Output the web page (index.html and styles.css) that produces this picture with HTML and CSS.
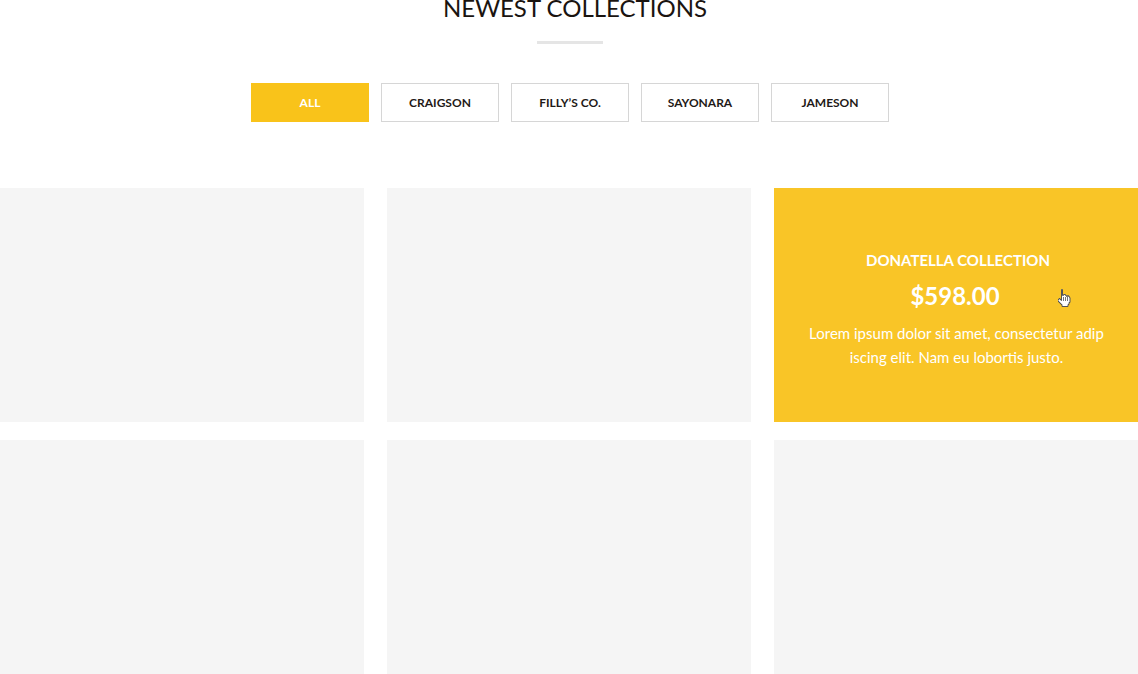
FILE: index.html
```html
<!DOCTYPE html>
<html>
<head>
<meta charset="utf-8">
<link rel="stylesheet" href="styles.css">
</head>
<body>
<section class="collections">
  <header class="head">
    <h2 class="title">NEWEST COLLECTIONS</h2>
    <div class="divider"></div>
  </header>
  <nav class="filters">
    <button class="filter active">ALL</button>
    <button class="filter">CRAIGSON</button>
    <button class="filter">FILLY’S CO.</button>
    <button class="filter">SAYONARA</button>
    <button class="filter">JAMESON</button>
  </nav>
  <div class="grid">
    <div class="card"></div>
    <div class="card"></div>
    <div class="card hover">
      <div class="info">
        <h3 class="name">DONATELLA COLLECTION</h3>
        <div class="price">$598.00</div>
        <p class="desc">Lorem ipsum dolor sit amet, consectetur adipiscing elit. Nam eu lobortis justo.</p>
      </div>
      <svg class="cursor" width="13" height="18" viewBox="0 0 13 18">
        <path d="M3.5 0.5h1v6h1v-1h2v1h1v1h1v-1h1v1h1v1h0.5v5h-1v2h-1v2h-6v-2h-1v-1h-1v-1h-1v-1h-1v-2h1v-1h1v1h1v1h0.5z" fill="#fff" stroke="#555" stroke-width="1" stroke-linejoin="miter"/>
        <path d="M5.5 8v4M7.5 8v4M9.5 8v4" stroke="#777" stroke-width="1"/>
      </svg>
    </div>
    <div class="card"></div>
    <div class="card"></div>
    <div class="card"></div>
  </div>
</section>
</body>
</html>
```
FILE: styles.css
```css
html, body {
  margin: 0;
  padding: 0;
  background: #fff;
  font-family: Lato, "Open Sans", sans-serif;
  overflow: hidden;
}
.collections {
  width: 1138px;
}
.head {
  display: flex;
  flex-direction: column;
  align-items: center;
}
.title {
  margin: -7px 0 0;
  font-size: 24px;
  line-height: 30px;
  font-weight: 400;
  color: #1a1410;
  padding-left: 12px;
}
.divider {
  width: 66px;
  height: 3px;
  background: #e5e5e5;
  margin-top: 18px;
  margin-left: 2px;
}
.filters {
  display: flex;
  justify-content: center;
  gap: 12px;
  margin-top: 39px;
  padding-left: 2px;
}
.filter {
  width: 118px;
  height: 39px;
  box-sizing: border-box;
  border: 1px solid #d6d6d6;
  background: #fff;
  font-family: Lato, sans-serif;
  font-weight: 700;
  font-size: 12px;
  color: #1f1a17;
  padding: 0;
  cursor: pointer;
}
.filter.active {
  background: #f9c31a;
  border-color: #f9c31a;
  color: #fff;
}
.grid {
  display: grid;
  grid-template-columns: repeat(3, 364px);
  grid-auto-rows: 234px;
  column-gap: 23px;
  row-gap: 18px;
  margin-top: 66px;
}
.card {
  background: #f5f5f5;
}
.card.hover {
  background: #f9c527;
  position: relative;
  display: flex;
  align-items: center;
  justify-content: center;
}
.info {
  width: 296px;
  text-align: center;
  color: #fff;
  margin-top: 8px;
}
.name {
  margin: 0;
  font-size: 15px;
  line-height: 20px;
  font-weight: 700;
  padding-left: 4px;
}
.price {
  margin-top: 12px;
  font-size: 24px;
  line-height: 28px;
  font-weight: 700;
  padding-right: 2px;
}
.desc {
  margin: 11px 0 0;
  padding-left: 1px;
  font-size: 15px;
  line-height: 24px;
  word-break: break-all;
}
.cursor {
  position: absolute;
  left: 284px;
  top: 101px;
}
```
